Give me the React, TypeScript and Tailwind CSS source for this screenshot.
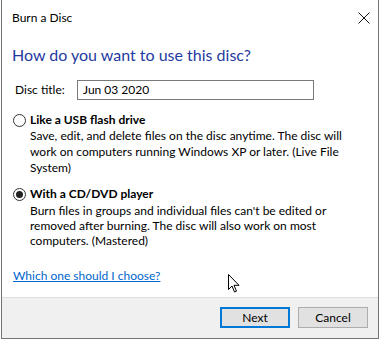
export default function App() {
  return (
    <div className="relative w-[380px] h-[342px] bg-white text-[12px] text-black font-['Segoe_UI','Lato',sans-serif] leading-4">
      {/* WINDOW */}
      <div className="ml-px w-[378px] h-[339px] border-x border-b border-[#747474] flex flex-col">
        {/* TITLE BAR */}
        <div className="h-[36px] flex items-start justify-between">
          <div className="pl-[10px] pt-[10px]">Burn a Disc</div>
          <svg width="12" height="12" viewBox="0 0 12 12" className="mt-[12px] mr-[8px]">
            <path d="M0.5 0.5 L11.5 11.5 M11.5 0.5 L0.5 11.5" stroke="#111" strokeWidth="1" />
          </svg>
        </div>

        {/* BODY */}
        <div className="flex-1 pl-[10px]">
          <h1 className="mt-[8px] text-[16px] leading-[22px] text-[#1f3aa0]">
            How do you want to use this disc?
          </h1>

          <div className="mt-[14px] flex items-center h-[20px]">
            <span className="pl-[3px] w-[65px]">Disc title:</span>
            <div className="w-[237px] h-[20px] border border-[#7a7a7a] pl-[5px] flex items-center">
              Jun 03 2020
            </div>
          </div>

          {/* OPTION 1 */}
          <div className="mt-[12px]">
            <label className="flex items-center h-4 font-bold">
              <span className="w-[13px] h-[13px] rounded-full border border-[#333] mr-[4px] ml-px"></span>
              Like a USB flash drive
            </label>
            <div className="pl-[18px] whitespace-nowrap">
              Save, edit, and delete files on the disc anytime. The disc will
              <br />
              work on computers running Windows XP or later. (Live File
              <br />
              System)
            </div>
          </div>

          {/* OPTION 2 */}
          <div className="mt-[10px]">
            <label className="flex items-center h-4 font-bold">
              <span className="w-[13px] h-[13px] rounded-full border border-[#333] mr-[4px] ml-px flex items-center justify-center">
                <span className="w-[7px] h-[7px] rounded-full bg-[#222]"></span>
              </span>
              With a CD/DVD player
            </label>
            <div className="pl-[18px] whitespace-nowrap leading-[15px] pt-px">
              Burn files in groups and individual files can't be edited or
              <br />
              removed after burning. The disc will also work on most
              <br />
              computers. (Mastered)
            </div>
          </div>

          <a className="mt-[20px] block w-fit pl-px text-[#0066cc] underline">
            Which one should I choose?
          </a>
        </div>

        {/* FOOTER */}
        <div className="h-[41px] bg-[#f0f0f0] border-t border-[#dfdfdf] flex items-center justify-end gap-[8px] pr-[10px] pb-[1px]">
          <button className="w-[70px] h-[21px] bg-[#e1e1e1] border-2 border-[#0078d7] leading-none">
            Next
          </button>
          <button className="w-[70px] h-[21px] bg-[#e1e1e1] border border-[#adadad] leading-none">
            Cancel
          </button>
        </div>
      </div>

      {/* MOUSE CURSOR */}
      <svg width="13" height="20" viewBox="0 0 13 20" className="absolute left-[228px] top-[274px]">
        <path d="M0.5 0.5 L0.5 15.5 L4 12 L6.5 18 L8.5 17.2 L6 11.3 L11 11.3 Z" fill="#fff" stroke="#000" strokeWidth="1" strokeLinejoin="miter" />
      </svg>
    </div>
  );
}
